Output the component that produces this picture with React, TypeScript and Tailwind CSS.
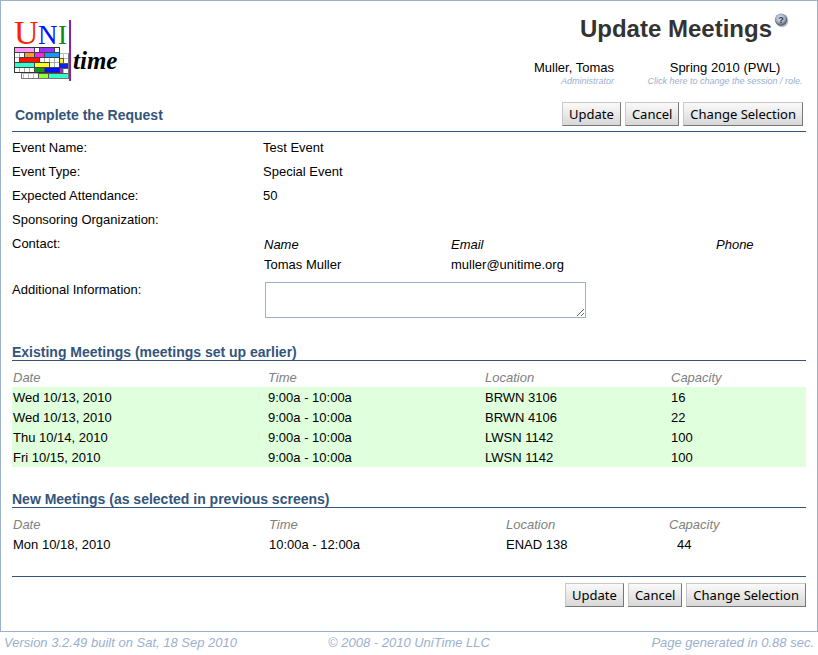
type Block = { x: number; y: number; w: number; fill: string };

const rearBlocks: Block[] = [
  { x: 44, y: 10, w: 5, fill: "#f5ee22" },
  { x: 44, y: 15, w: 10, fill: "#1022ee" },
  { x: 38, y: 20, w: 10, fill: "#dd11cc" },
  { x: 24, y: 25, w: 10, fill: "#99ff33" },
  { x: 34, y: 25, w: 20, fill: "#33ffcc" },
];

const frontBlocks: Block[] = [
  { x: 0, y: 0, w: 20, fill: "#ff99ff" },
  { x: 25, y: 0, w: 15, fill: "#9933ff" },
  { x: 10, y: 5, w: 10, fill: "#ff9933" },
  { x: 20, y: 5, w: 10, fill: "#ff22ee" },
  { x: 30, y: 5, w: 15, fill: "#1199ff" },
  { x: 5, y: 10, w: 20, fill: "#ff1100" },
  { x: 0, y: 15, w: 20, fill: "#33ffcc" },
  { x: 20, y: 15, w: 15, fill: "#ffff22" },
  { x: 20, y: 20, w: 10, fill: "#119911" },
  { x: 30, y: 20, w: 15, fill: "#0011ff" },
];

function Blocks({ items, stroke }: { items: Block[]; stroke: string }) {
  return (
    <>
      {items.map((b) => (
        <rect key={`${b.x}-${b.y}`} x={b.x} y={b.y} width={b.w} height={5} fill={b.fill} stroke={stroke} />
      ))}
    </>
  );
}

function Logo() {
  return (
    <svg width="110" height="70" viewBox="0 -4 110 70" role="img" aria-label="UniTime">
      <g fontFamily="'Liberation Serif', serif">
        <text x="1" y="27" fontSize="34" fill="#ff2200">U</text>
        <text x="25" y="27" fontSize="27" fill="#0011ff">N</text>
        <text x="45" y="27" fontSize="27" fill="#118811">I</text>
      </g>
      <g transform="translate(1.5 36.5)">
        <rect x="7" y="0" width="47" height="25" fill="#fff" />
        <path
          d="M7 0H54M7 5H54M7 10H54M7 15H54M7 20H54M7 25H54M9 0V25M14 0V25M19 0V25M24 0V25M29 0V25M34 0V25M39 0V25M44 0V25M49 0V25M54 0V25M7 0V25"
          fill="none"
          stroke="#bbb"
        />
        <g transform="translate(0 -5)">
          <Blocks items={rearBlocks} stroke="#556" />
        </g>
        <path d="M7 20V25H54V0" fill="none" stroke="#777" />
      </g>
      <g transform="translate(1.5 30.5)">
        <rect width="45" height="25" fill="#fff" />
        <path
          d="M0 5H45M0 10H45M0 15H45M0 20H45M5 0V25M10 0V25M15 0V25M20 0V25M25 0V25M30 0V25M35 0V25M40 0V25"
          fill="none"
          stroke="#aaa"
        />
        <Blocks items={frontBlocks} stroke="#444" />
        <rect width="45" height="25" fill="none" stroke="#333" />
      </g>
      <rect x="56" y="3" width="2" height="61" fill="#8822aa" />
      <text x="60" y="52" fontSize="25" fontWeight="700" fontStyle="italic" fontFamily="'Liberation Serif', serif">
        time
      </text>
    </svg>
  );
}

function HelpIcon() {
  return (
    <svg width="15" height="16" viewBox="0 0 15 16" aria-hidden="true">
      <defs>
        <radialGradient id="ball" cx="0.45" cy="0.4" r="0.62">
          <stop offset="0" stopColor="#e8eef6" />
          <stop offset="0.55" stopColor="#a3b2c8" />
          <stop offset="1" stopColor="#3a4557" />
        </radialGradient>
      </defs>
      <circle cx="8" cy="7.8" r="6.4" fill="#bbb" />
      <circle cx="7" cy="6.6" r="6.2" fill="url(#ball)" />
      <text x="7" y="10" textAnchor="middle" fontSize="9" fontWeight="700" fill="#1f2937" fontFamily="'Liberation Sans', sans-serif">
        ?
      </text>
    </svg>
  );
}

function Actions() {
  return (
    <div className="flex gap-1">
      {["Update", "Cancel", "Change Selection"].map((label) => (
        <button
          key={label}
          type="button"
          className="h-6 border border-t-[#c8c8c8] border-r-[#777] border-b-[#777] border-l-[#c8c8c8] bg-linear-to-b from-[#fafafa] to-[#d8d8d8] px-1.5 font-['Noto_Sans','Open_Sans',sans-serif] text-[13px] leading-5 whitespace-nowrap"
        >
          {label}
        </button>
      ))}
    </div>
  );
}

function Field({ label, value }: { label: string; value: string }) {
  return (
    <div className="flex h-6">
      <dt className="w-[251px] shrink-0">{label}</dt>
      <dd>{value}</dd>
    </div>
  );
}

function SectionTitle({ children }: { children: string }) {
  return (
    <h2 className="border-b border-[#33557a] text-[14px] leading-4 font-bold text-[#33557a]">{children}</h2>
  );
}

const existing = [
  ["Wed 10/13, 2010", "9:00a - 10:00a", "BRWN 3106", "16"],
  ["Wed 10/13, 2010", "9:00a - 10:00a", "BRWN 4106", "22"],
  ["Thu 10/14, 2010", "9:00a - 10:00a", "LWSN 1142", "100"],
  ["Fri 10/15, 2010", "9:00a - 10:00a", "LWSN 1142", "100"],
];

export default function App() {
  return (
    <div className="bg-white font-['Liberation_Sans',Arial,sans-serif] text-[13px] leading-5 text-black">
      <div className="border border-[#9cb0d0] px-[11px] pb-6">
        <header className="flex justify-between pt-3">
          <div className="pl-px">
            <Logo />
          </div>
          <div>
            <div className="flex justify-end pr-[17px]">
              <h1 className="pt-px text-[24px] leading-[30px] font-bold text-[#333]">Update Meetings</h1>
              <a href="#help" aria-label="Help" className="ml-0.5 h-4">
                <HelpIcon />
              </a>
            </div>
            <div className="mt-4 flex justify-end gap-[30px]">
              <div className="text-right">
                <div className="leading-4">Muller, Tomas</div>
                <div className="text-[9px] leading-[10px] text-[#9cb0d0] italic">Administrator</div>
              </div>
              <div className="w-[162px] text-center">
                <div className="leading-4">Spring 2010 (PWL)</div>
                <a href="#session" className="block text-[9px] leading-[10px] text-[#9cb0d0] italic">
                  Click here to change the session / role.
                </a>
              </div>
            </div>
          </div>
        </header>

        <form onSubmit={(e) => e.preventDefault()}>
          <div className="mt-4 flex items-center justify-between border-b border-[#33557a] px-[3px] pb-[5px]">
            <h2 className="pt-0.5 text-[14px] font-bold text-[#33557a]">Complete the Request</h2>
            <Actions />
          </div>

          <dl className="pt-1.5">
            <Field label="Event Name:" value="Test Event" />
            <Field label="Event Type:" value="Special Event" />
            <Field label="Expected Attendance:" value="50" />
            <Field label="Sponsoring Organization:" value="" />
          </dl>
          <div className="flex">
            <div className="w-[252px] shrink-0">Contact:</div>
            <table className="mt-px grow table-fixed text-left">
              <thead>
                <tr className="italic">
                  <th className="w-[187px] p-0 font-normal">Name</th>
                  <th className="w-[265px] p-0 font-normal">Email</th>
                  <th className="p-0 font-normal">Phone</th>
                </tr>
              </thead>
              <tbody>
                <tr>
                  <td className="p-0">Tomas Muller</td>
                  <td className="p-0">muller@unitime.org</td>
                  <td className="p-0" />
                </tr>
              </tbody>
            </table>
          </div>
          <div className="mt-[5px] flex">
            <label htmlFor="info" className="w-[253px] shrink-0">
              Additional Information:
            </label>
            <textarea id="info" className="mt-0.5 block h-9 w-[321px] resize border border-[#9cb0d0] bg-white" />
          </div>

          <section className="mt-[26px]">
            <SectionTitle>Existing Meetings (meetings set up earlier)</SectionTitle>
            <table className="mt-1.5 w-full table-fixed text-left leading-[18px]">
              <thead>
                <tr className="text-[#808080] italic">
                  <th className="w-[256px] pt-0.5 pl-px font-normal">Date</th>
                  <th className="w-[217px] pt-0.5 font-normal">Time</th>
                  <th className="w-[186px] pt-0.5 font-normal">Location</th>
                  <th className="pt-0.5 font-normal">Capacity</th>
                </tr>
              </thead>
              <tbody className="bg-[#dfffdd]">
                {existing.map((row, i) => (
                  <tr key={i}>
                    <td className="pt-0.5 pl-px">{row[0]}</td>
                    <td className="pt-0.5">{row[1]}</td>
                    <td className="pt-0.5">{row[2]}</td>
                    <td className="pt-0.5">{row[3]}</td>
                  </tr>
                ))}
              </tbody>
            </table>
          </section>

          <section className="mt-6">
            <SectionTitle>New Meetings (as selected in previous screens)</SectionTitle>
            <table className="mt-1.5 w-full table-fixed text-left leading-[18px]">
              <thead>
                <tr className="text-[#808080] italic">
                  <th className="w-[257px] pt-0.5 pl-px font-normal">Date</th>
                  <th className="w-[237px] pt-0.5 font-normal">Time</th>
                  <th className="w-[163px] pt-0.5 font-normal">Location</th>
                  <th className="pt-0.5 font-normal">Capacity</th>
                </tr>
              </thead>
              <tbody>
                <tr>
                  <td className="pt-0.5 pl-px">Mon 10/18, 2010</td>
                  <td className="pt-0.5">10:00a - 12:00a</td>
                  <td className="pt-0.5">ENAD 138</td>
                  <td className="pt-0.5 pl-2">44</td>
                </tr>
              </tbody>
            </table>
          </section>

          <div className="mt-[22px] flex justify-end border-t border-[#33557a] pt-1.5">
            <Actions />
          </div>
        </form>
      </div>
      <footer className="grid grid-cols-[1fr_auto_1fr] px-1 pt-px text-[#9cb0d0] italic">
        <span>Version 3.2.49 built on Sat, 18 Sep 2010</span>
        <span>© 2008 - 2010 UniTime LLC</span>
        <span className="text-right">Page generated in 0.88 sec.</span>
      </footer>
    </div>
  );
}
